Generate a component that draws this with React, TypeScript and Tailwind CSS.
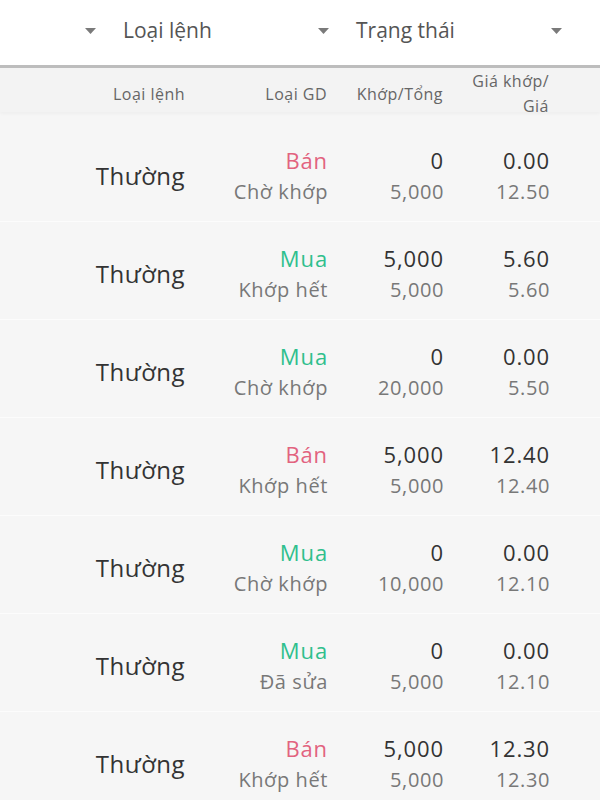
import React from 'react';

type Order = {
  side: 'Bán' | 'Mua';
  status: string;
  matched: string;
  total: string;
  price: string;
  orderPrice: string;
};

const orders: Order[] = [
  { side: 'Bán', status: 'Chờ khớp', matched: '0', total: '5,000', price: '0.00', orderPrice: '12.50' },
  { side: 'Mua', status: 'Khớp hết', matched: '5,000', total: '5,000', price: '5.60', orderPrice: '5.60' },
  { side: 'Mua', status: 'Chờ khớp', matched: '0', total: '20,000', price: '0.00', orderPrice: '5.50' },
  { side: 'Bán', status: 'Khớp hết', matched: '5,000', total: '5,000', price: '12.40', orderPrice: '12.40' },
  { side: 'Mua', status: 'Chờ khớp', matched: '0', total: '10,000', price: '0.00', orderPrice: '12.10' },
  { side: 'Mua', status: 'Đã sửa', matched: '0', total: '5,000', price: '0.00', orderPrice: '12.10' },
  { side: 'Bán', status: 'Khớp hết', matched: '5,000', total: '5,000', price: '12.30', orderPrice: '12.30' },
];

const font = { fontFamily: '"Open Sans", "Noto Sans", sans-serif' };

const Caret = () => (
  <svg width="11" height="6" viewBox="0 0 11 6" className="shrink-0">
    <path d="M0 0h11L5.5 6z" fill="#7a7a7a" />
  </svg>
);

// first filter is scrolled off to the left, only its caret shows
const filters = ['', 'Loại lệnh', 'Trạng thái'];

const primary = 'text-[22px] leading-[31px] tracking-[0.04em] -mr-[1px]';
const secondary = 'text-[20px] leading-[31px] tracking-[0.03em] -mr-[1px] text-[#787878]';

const OrderRow = ({ o }: { o: Order }) => (
  <div className="grid grid-cols-[185px_142px_116px_106px] h-[98px] pt-[21px] pb-[15px] border-b border-[#fcfcfc] text-right">
    <div className="flex items-center justify-end text-[24px] tracking-[0.02em] text-[#333]">Thường</div>
    <div className="flex flex-col">
      <span className={`${primary} ${o.side === 'Bán' ? 'text-[#e2637f]' : 'text-[#2fbf8d]'}`}>{o.side}</span>
      <span className={secondary}>{o.status}</span>
    </div>
    <div className="flex flex-col">
      <span className={`${primary} text-[#333]`}>{o.matched}</span>
      <span className={secondary}>{o.total}</span>
    </div>
    <div className="flex flex-col">
      <span className={`${primary} text-[#333]`}>{o.price}</span>
      <span className={secondary}>{o.orderPrice}</span>
    </div>
  </div>
);

export default function App() {
  return (
    <div className="w-[600px] h-[800px] overflow-hidden bg-[#f6f6f6]" style={font}>
      <div className="h-[65px] bg-white overflow-hidden">
        <div className="flex items-center h-full -ml-[136px] pb-[4px]">
          {filters.map((f, i) => (
            <div key={i} className="w-[233px] shrink-0 flex items-center justify-between pl-[26px] pr-[1px]">
              <span className="text-[21px] text-[#555]">{f}</span>
              <Caret />
            </div>
          ))}
        </div>
      </div>
      <div className="h-[3px] bg-[#bdbdbd]" />
      <div className="grid grid-cols-[185px_142px_116px_106px] h-[44px] bg-[#f3f3f3] text-right text-[16px] tracking-[0.03em] text-[#666] overflow-hidden shadow-[0_2px_3px_rgba(0,0,0,0.03)]">
        <div className="flex items-center justify-end">Loại lệnh</div>
        <div className="flex items-center justify-end">Loại GD</div>
        <div className="flex items-center justify-end">Khớp/Tổng</div>
        <div className="leading-[25px] pt-[1px] pl-[4px]">Giá khớp/ Giá</div>
      </div>
      <div className="pt-[12px]">
        {orders.map((o, i) => (
          <OrderRow key={i} o={o} />
        ))}
      </div>
    </div>
  );
}
